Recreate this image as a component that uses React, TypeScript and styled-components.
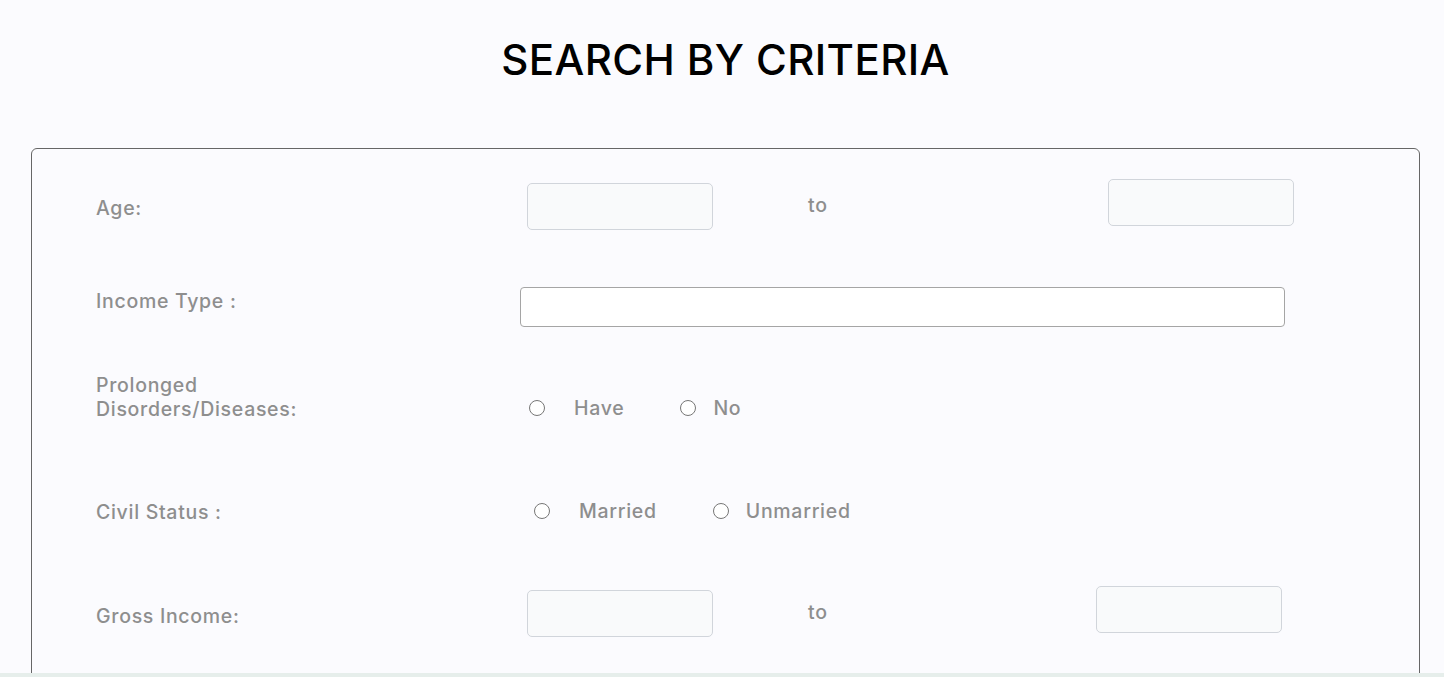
import React from "react";
import styled, { createGlobalStyle } from "styled-components";

const GlobalStyle = createGlobalStyle`
  html, body {
    margin: 0;
    padding: 0;
    background: #fbfbfe;
  }
  * { box-sizing: border-box; }
`;

const Page = styled.div`
  height: 677px;
  display: flex;
  flex-direction: column;
  overflow: hidden;
  font-family: Inter, "Open Sans", sans-serif;
`;

const Main = styled.main`
  flex: 1;
  overflow: hidden;
  background: #fbfbfe;
`;

const BottomStrip = styled.div`
  height: 4px;
  flex: none;
  background: #e6eeeb;
`;

const Title = styled.h1`
  margin: 0;
  height: 148px;
  padding-top: 35px;
  padding-left: 7px;
  text-align: center;
  font-family: Inter, sans-serif;
  font-weight: 500;
  font-size: 42px;
  letter-spacing: 0.4px;
  line-height: 50px;
  color: #000;
`;

const Card = styled.section`
  margin: 0 24px 0 31px;
  border: 1px solid #666666;
  border-radius: 6px;
  padding: 27px 64px 40px 64px;
  min-height: 600px;
  display: flex;
  flex-direction: column;
`;

const Row = styled.div<{ $mt: number; $h: number }>`
  margin-top: ${(p) => p.$mt}px;
  height: ${(p) => p.$h}px;
  display: grid;
  grid-template-columns: 424px 1fr;
  align-items: center;
`;

const textStyle = `
  font-size: 19.5px;
  line-height: 24px;
  font-weight: 500;
  letter-spacing: 0.7px;
  color: #8e8e8e;
`;

const Label = styled.label<{ $mb?: number }>`
  ${textStyle}
  margin-bottom: ${(p) => p.$mb ?? 0}px;
  max-width: 220px;
`;

const Range = styled.div<{ $toCol: number }>`
  display: grid;
  grid-template-columns: 281px ${(p) => p.$toCol}px 187px;
  align-items: center;
  padding-left: 7px;
`;

const SmallInput = styled.input<{ $mb?: number }>`
  width: 186px;
  height: 47px;
  border: 1px solid #d1d5db;
  border-radius: 5px;
  background: #f9fafb;
  margin: 0 0 ${(p) => p.$mb ?? 0}px 0;
  outline: none;
`;

const ToText = styled.span<{ $mb?: number }>`
  ${textStyle}
  margin-bottom: ${(p) => p.$mb ?? 0}px;
`;

const WideInput = styled.input`
  width: 765px;
  height: 40px;
  border: 1px solid #a5a5a5;
  border-radius: 4px;
  background: #ffffff;
  margin: 0;
  outline: none;
`;

const RadioGroup = styled.div<{ $pl: number }>`
  display: flex;
  align-items: center;
  padding-left: ${(p) => p.$pl}px;
  gap: 56px;
`;

const Option = styled.label<{ $gap: number }>`
  ${textStyle}
  display: flex;
  align-items: center;
  gap: ${(p) => p.$gap}px;
`;

const Radio = styled.input.attrs({ type: "radio" })`
  width: 16px;
  height: 16px;
  margin: 0;
  flex: none;
`;

export default function App() {
  return (
    <>
      <GlobalStyle />
      <Page>
        <Main>
          <Title>SEARCH BY CRITERIA</Title>
          <Card>
            <Row $mt={0} $h={60}>
              <Label $mb={-3}>Age:</Label>
              <Range $toCol={300}>
                <SmallInput />
                <ToText $mb={2}>to</ToText>
                <SmallInput $mb={8} />
              </Range>
            </Row>
            <Row $mt={36} $h={70}>
              <Label $mb={12}>Income Type :</Label>
              <WideInput />
            </Row>
            <Row $mt={31} $h={60}>
              <Label $mb={22}>Prolonged Disorders/Diseases:</Label>
              <RadioGroup $pl={9}>
                <Option $gap={29}>
                  <Radio name="disease" />
                  Have
                </Option>
                <Option $gap={17}>
                  <Radio name="disease" />
                  No
                </Option>
              </RadioGroup>
            </Row>
            <Row $mt={58} $h={40}>
              <Label $mb={-2}>Civil Status :</Label>
              <RadioGroup $pl={14}>
                <Option $gap={29}>
                  <Radio name="civil" />
                  Married
                </Option>
                <Option $gap={17}>
                  <Radio name="civil" />
                  Unmarried
                </Option>
              </RadioGroup>
            </Row>
            <Row $mt={52} $h={60}>
              <Label $mb={-6}>Gross Income:</Label>
              <Range $toCol={288}>
                <SmallInput />
                <ToText $mb={2}>to</ToText>
                <SmallInput $mb={7} />
              </Range>
            </Row>
          </Card>
        </Main>
        <BottomStrip />
      </Page>
    </>
  );
}
